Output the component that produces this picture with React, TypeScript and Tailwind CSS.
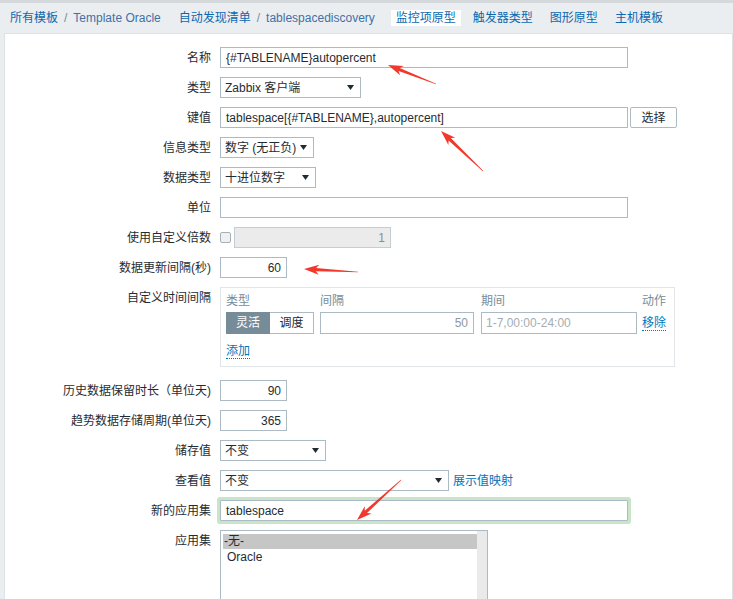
import React from "react";

const Caret = () => (
  <svg width="7" height="5" viewBox="0 0 7 5" className="shrink-0">
    <polygon points="0,0 7,0 3.5,5" fill="#1f2c33" />
  </svg>
);

function Row({
  label,
  children,
  top = false,
  className = "",
}: {
  label: string;
  children: React.ReactNode;
  top?: boolean;
  className?: string;
}) {
  return (
    <div className={`flex ${top ? "items-start" : "items-center"} ${className}`}>
      <div
        className={`w-[206px] shrink-0 text-right text-[12px] leading-[14px] text-[#1f2c33] whitespace-nowrap ${
          top ? "pt-[4px]" : ""
        }`}
      >
        {label}
      </div>
      <div className="ml-[9px] flex items-center">{children}</div>
    </div>
  );
}

function TextBox({
  w,
  children,
  right = false,
  className = "",
}: {
  w: string;
  children?: React.ReactNode;
  right?: boolean;
  className?: string;
}) {
  return (
    <div
      className={`${w} h-[21px] border border-[#acbac3] bg-white px-[5px] flex items-center text-[12px] text-[#1f2c33] whitespace-nowrap ${
        right ? "justify-end" : ""
      } ${className}`}
    >
      {children}
    </div>
  );
}

function Select({ w, value }: { w: string; value: string }) {
  return (
    <div
      className={`${w} h-[21px] border border-[#acbac3] bg-white pl-[4px] pr-[6px] flex items-center justify-between text-[12px] text-[#1f2c33] whitespace-nowrap`}
    >
      <span>{value}</span>
      <Caret />
    </div>
  );
}

function Arrow({ x1, y1, x2, y2 }: { x1: number; y1: number; x2: number; y2: number }) {
  const dx = x2 - x1;
  const dy = y2 - y1;
  const len = Math.sqrt(dx * dx + dy * dy);
  const ux = dx / len;
  const uy = dy / len;
  const px = -uy;
  const py = ux;
  const headLen = 15;
  const headW = 5;
  const bx = x2 - ux * headLen;
  const by = y2 - uy * headLen;
  const shaftEnd = 1.6;
  const shaftStart = 0.3;
  const pts = [
    [x1 + px * shaftStart, y1 + py * shaftStart],
    [bx + ux * 3 + px * shaftEnd, by + uy * 3 + py * shaftEnd],
    [bx + px * headW, by + py * headW],
    [x2, y2],
    [bx - px * headW, by - py * headW],
    [bx + ux * 3 - px * shaftEnd, by + uy * 3 - py * shaftEnd],
    [x1 - px * shaftStart, y1 - py * shaftStart],
  ]
    .map((p) => `${p[0].toFixed(1)},${p[1].toFixed(1)}`)
    .join(" ");
  return <polygon points={pts} fill="#f2382c" />;
}

export default function App() {
  return (
    <div className="relative w-[733px] h-[599px] overflow-hidden bg-[#ebeef0] font-['Liberation_Sans','Noto_Sans_CJK_SC',sans-serif] border-t-[3px] border-[#d5d9dc] flex flex-col">
      {/* header */}
      <div className="h-[30px] shrink-0 flex items-center pl-[10px] text-[12px] leading-[14px] whitespace-nowrap">
        <span className="text-[#0b67ae]">所有模板</span>
        <span className="text-[#768d99] mx-[6px]">/</span>
        <span className="text-[#3f70a8]">Template Oracle</span>
        <span className="text-[#0b67ae] ml-[18px]">自动发现清单</span>
        <span className="text-[#768d99] mx-[6px]">/</span>
        <span className="text-[#3f70a8]">tablespacediscovery</span>
        <div className="ml-[16px] flex items-center gap-[7px]">
          <span className="bg-white px-[5px] h-[16px] flex items-center text-[#0b67ae]">监控项原型</span>
          <span className="px-[5px] text-[#0b67ae]">触发器类型</span>
          <span className="px-[5px] text-[#0b67ae]">图形原型</span>
          <span className="px-[5px] text-[#0b67ae]">主机模板</span>
        </div>
      </div>

      {/* content */}
      <div className="flex-1 ml-[4px] bg-white border-l border-t border-r border-[#dde2e5] pt-[13px]">
        <div className="flex flex-col gap-[9px]">
          <Row label="名称">
            <TextBox w="w-[408px]">{"{#TABLENAME}autopercent"}</TextBox>
          </Row>
          <Row label="类型">
            <Select w="w-[141px]" value="Zabbix 客户端" />
          </Row>
          <Row label="键值">
            <TextBox w="w-[408px]">{"tablespace[{#TABLENAME},autopercent]"}</TextBox>
            <div className="ml-[2px] w-[47px] h-[21px] border border-[#acbac3] rounded-[2px] bg-white flex items-center justify-center text-[12px] text-[#1f2c33]">
              选择
            </div>
          </Row>
          <Row label="信息类型">
            <Select w="w-[94px]" value="数字 (无正负)" />
          </Row>
          <Row label="数据类型">
            <Select w="w-[96px]" value="十进位数字" />
          </Row>
          <Row label="单位">
            <TextBox w="w-[408px]" />
          </Row>
          <Row label="使用自定义倍数">
            <div className="w-[11px] h-[11px] border border-[#a5b0b7] rounded-[2px] bg-[#eef0f1]" />
            <div className="ml-[3px] w-[157px] h-[21px] border border-[#c4cdd2] bg-[#ebebeb] px-[5px] flex items-center justify-end text-[12px] text-[#8c8c8c]">
              1
            </div>
          </Row>
          <Row label="数据更新间隔(秒)">
            <TextBox w="w-[67px]" right>
              60
            </TextBox>
          </Row>
          <Row label="自定义时间间隔" top className="mb-[4px]">
            <div className="w-[455px] h-[80px] border border-[#e2e6e8] px-[5px] pt-[5px] text-[12px] leading-[14px]">
              <div className="flex text-[#768d99] h-[15px] items-center">
                <div className="w-[94px]">类型</div>
                <div className="w-[161px]">间隔</div>
                <div className="w-[156px]">期间</div>
                <div className="flex-1 text-right pr-[3px]">动作</div>
              </div>
              <div className="flex items-center mt-[4px] h-[22px]">
                <div className="w-[94px] flex h-[22px]">
                  <div className="w-[44px] h-[22px] bg-[#768d99] border border-[#768d99] text-white flex items-center justify-center">
                    灵活
                  </div>
                  <div className="w-[44px] h-[22px] bg-white border border-[#acbac3] border-l-0 text-[#1f2c33] flex items-center justify-center">
                    调度
                  </div>
                </div>
                <div className="w-[154px] h-[22px] border border-[#acbac3] px-[5px] flex items-center justify-end text-[#8d9aa2]">
                  50
                </div>
                <div className="ml-[7px] w-[156px] h-[22px] border border-[#acbac3] px-[4px] flex items-center text-[#a4adb3]">
                  1-7,00:00-24:00
                </div>
                <div className="flex-1 text-right pr-[3px]">
                  <span className="text-[#0275b8] border-b border-dotted border-[#0275b8]">移除</span>
                </div>
              </div>
              <div className="mt-[10px] h-[15px] flex items-center">
                <span className="text-[#0275b8] border-b border-dotted border-[#0275b8]">添加</span>
              </div>
            </div>
          </Row>
          <Row label="历史数据保留时长（单位天)">
            <TextBox w="w-[67px]" right>
              90
            </TextBox>
          </Row>
          <Row label="趋势数据存储周期(单位天)">
            <TextBox w="w-[67px]" right>
              365
            </TextBox>
          </Row>
          <Row label="储存值">
            <Select w="w-[106px]" value="不变" />
          </Row>
          <Row label="查看值">
            <Select w="w-[229px]" value="不变" />
            <span className="ml-[4px] text-[12px] text-[#0275b8]">展示值映射</span>
          </Row>
          <Row label="新的应用集">
            <TextBox w="w-[408px]" className="rounded-[1px] shadow-[0_0_0_3px_#c8e5c9]">
              tablespace
            </TextBox>
          </Row>
          <Row label="应用集" top>
            <div className="w-[268px] h-[100px] border border-[#acbac3] flex">
              <div className="flex-1 pt-[3px] pl-[2px] text-[12px] leading-[15px] text-[#1f2c33]">
                <div className="bg-[#c6c6c6] pl-[1px]">-无-</div>
                <div className="pl-[4px] pt-[1px]">Oracle</div>
              </div>
              <div className="w-[10px] bg-[#eaeaea]" />
            </div>
          </Row>
        </div>
      </div>

      {/* annotation arrows */}
      <svg
        className="absolute left-0 top-0 pointer-events-none"
        width="733"
        height="599"
        viewBox="0 0 733 599"
      >
        <Arrow x1={436} y1={81} x2={388} y2={62} />
        <Arrow x1={483} y1={168} x2={441} y2={128} />
        <Arrow x1={358} y1={269} x2={304} y2={266} />
        <Arrow x1={401} y1={477} x2={357} y2={517} />
      </svg>
    </div>
  );
}
